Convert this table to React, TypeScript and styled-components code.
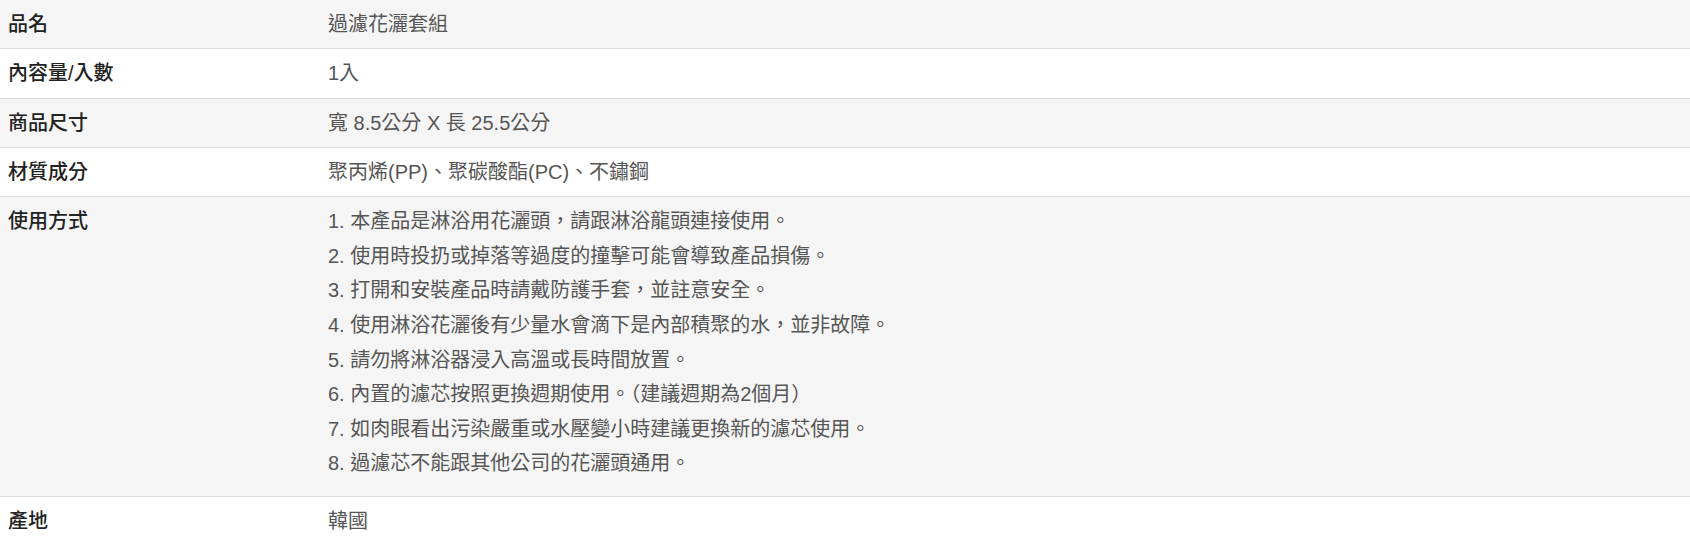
import React from "react";
import styled, { createGlobalStyle } from "styled-components";

const GlobalStyle = createGlobalStyle`
    * {
        box-sizing: border-box;
    }
    body {
        margin: 0;
        background-color: #fff;
        font-family: "Liberation Sans", "Noto Sans CJK TC", Arial, sans-serif;
        font-size: 20px;
        color: #555;
    }
`;

const SpecTable = styled.table`
    width: 100%;
    border-collapse: collapse;
    table-layout: fixed;
`;

const SpecRow = styled.tr<{ $striped: boolean }>`
    background-color: ${props => props.$striped ? "#f5f5f5" : "#fff"};
    border-bottom: 1px solid #ddd;

    &:last-child {
        border-bottom: none;
    }
`;

const SpecLabel = styled.th`
    width: 320px;
    padding: 12px 8px;
    text-align: left;
    vertical-align: top;
    font-weight: 500;
    line-height: 24.3px;
    color: #222;
`;

const SpecValue = styled.td`
    padding: 12px 8px;
    vertical-align: top;
    line-height: 24.3px;
    color: #555;
`;

const UsageList = styled.ol`
    margin: 0 0 -2px;
    padding: 0;
    list-style: none;
`;

const UsageItem = styled.li`
    margin-bottom: 10.3px;
    line-height: 24.3px;
`;

// usage notes, numbered as in the source text
const usageNotes = [
    "本產品是淋浴用花灑頭，請跟淋浴龍頭連接使用。",
    "使用時投扔或掉落等過度的撞擊可能會導致產品損傷。",
    "打開和安裝產品時請戴防護手套，並註意安全。",
    "使用淋浴花灑後有少量水會滴下是內部積聚的水，並非故障。",
    "請勿將淋浴器浸入高溫或長時間放置。",
    "內置的濾芯按照更換週期使用。（建議週期為2個月）",
    "如肉眼看出污染嚴重或水壓變小時建議更換新的濾芯使用。",
    "過濾芯不能跟其他公司的花灑頭通用。",
];

interface SpecItem {
    label: string;
    value: React.ReactNode;
}

const specs: SpecItem[] = [
    { label: "品名", value: "過濾花灑套組" },
    { label: "內容量/入數", value: "1入" },
    { label: "商品尺寸", value: "寬 8.5公分 X 長 25.5公分" },
    { label: "材質成分", value: "聚丙烯(PP)、聚碳酸酯(PC)、不鏽鋼" },
    {
        label: "使用方式",
        value: (
            <UsageList>
                {usageNotes.map((note, i) => (
                    <UsageItem key={i}>{`${i + 1}. ${note}`}</UsageItem>
                ))}
            </UsageList>
        ),
    },
    { label: "產地", value: "韓國" },
];

const App = () => {
    return (
        <>
            <GlobalStyle />
            <SpecTable>
                <tbody>
                    {specs.map((spec, i) => (
                        <SpecRow key={spec.label} $striped={i % 2 === 0}>
                            <SpecLabel>{spec.label}</SpecLabel>
                            <SpecValue>{spec.value}</SpecValue>
                        </SpecRow>
                    ))}
                </tbody>
            </SpecTable>
        </>
    );
};

export default App;
